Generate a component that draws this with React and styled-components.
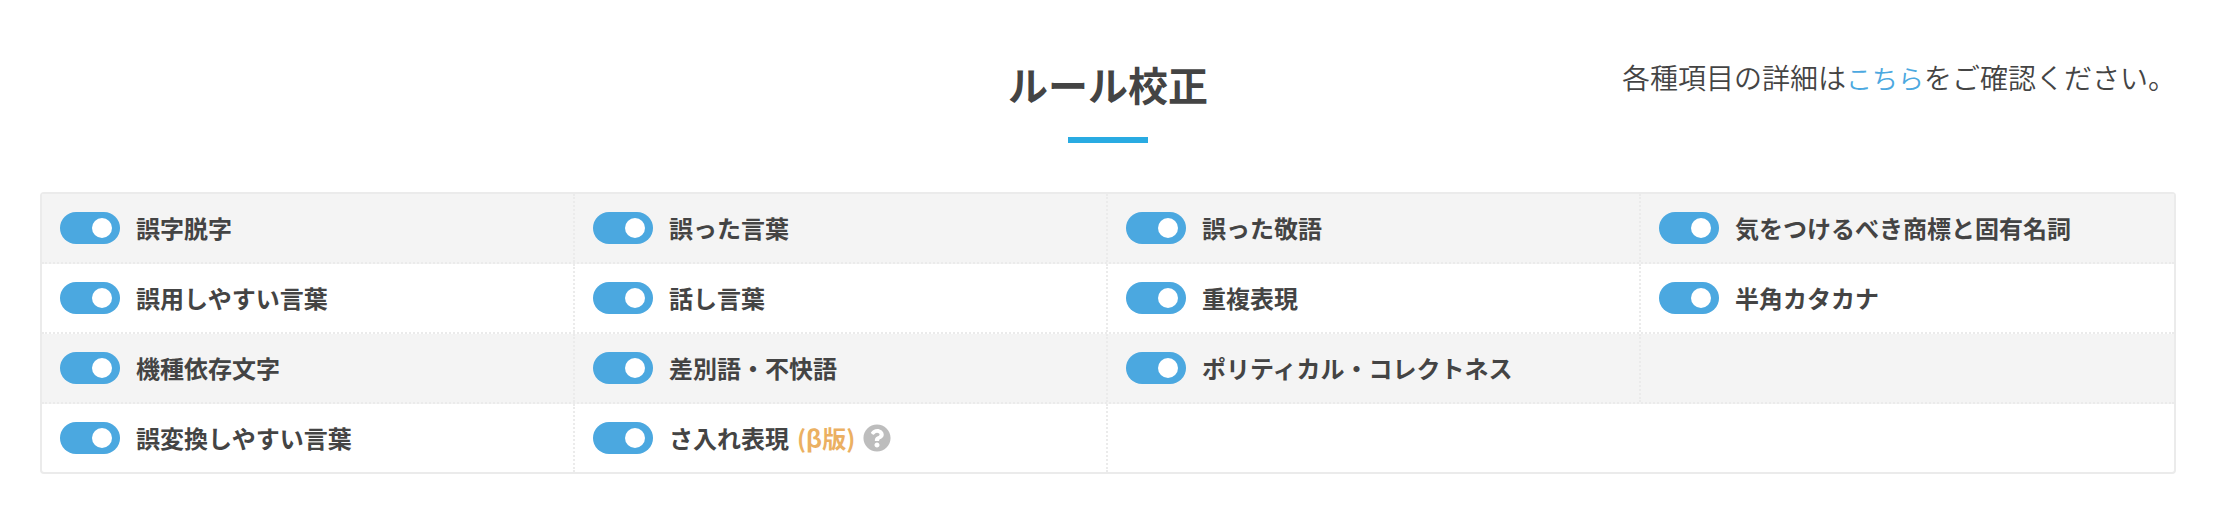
import { useState } from "react"
import styled, { createGlobalStyle } from "styled-components"
import { FaQuestionCircle } from "react-icons/fa"

const GlobalStyle = createGlobalStyle`
    body {
        margin: 0;
        background: #fff;
        color: #444;
        font-family: "Noto Sans CJK JP", sans-serif;
    }
`;

const Section = styled.section`
    padding: 53px 46px 34px 40px;
`;

const Header = styled.header`
    display: grid;
    grid-template-columns: 1fr auto 1fr;
    align-items: start;
    margin-bottom: 49px;
`;

const Title = styled.h2`
    grid-column: 2;
    display: flex;
    flex-direction: column;
    align-items: center;
    gap: 22px;
    margin: 0;
    font-size: 40px;
    font-weight: 700;
    line-height: 62px;

    &::after {
        content: "";
        width: 80px;
        height: 6px;
        background: #29abe2;
    }
`;

const Note = styled.p`
    margin: 0;
    font-size: 28px;
    font-weight: 350;
    line-height: 48px;
    text-align: right;
`;

const NoteLink = styled.a`
    color: #4ba8e0;
    font-size: 26px;
    text-decoration: none;
`;

const RuleTable = styled.div`
    border: 2px solid #ebebeb;
    border-radius: 4px;
`;

const RuleRow = styled.ul`
    display: grid;
    grid-template-columns: repeat(4, 1fr);
    margin: 0;
    padding: 0;
    list-style: none;
    border-bottom: 2px dotted #ebebeb;

    &:nth-child(odd) {
        background: #f4f4f4;
    }

    &:last-child {
        border-bottom: none;
    }
`;

const RuleCell = styled.li`
    display: flex;
    align-items: center;
    gap: 8px;
    box-sizing: border-box;
    height: 68px;
    padding: 0 18px;
    border-right: 2px dotted #ebebeb;

    &:nth-child(4) {
        border-right: none;
    }
`;

const RuleLabel = styled.label`
    display: flex;
    align-items: center;
    font-size: 24px;
    font-weight: 700;
    line-height: 34px;
    white-space: nowrap;
    cursor: pointer;
`;

const Toggle = styled.input`
    appearance: none;
    display: flex;
    align-items: center;
    box-sizing: border-box;
    width: 60px;
    height: 32px;
    margin: 0 16px 0 0;
    padding: 0 8px;
    border-radius: 16px;
    background: #bdbdbd;
    cursor: pointer;

    &::before {
        content: "";
        width: 20px;
        height: 20px;
        border-radius: 50%;
        background: #fff;
    }

    &:checked {
        justify-content: flex-end;
        background: #4ba8e0;
    }
`;

const Beta = styled.span`
    margin-left: 8px;
    color: #ebb062;
`;

const HelpButton = styled.button`
    display: flex;
    padding: 0;
    border: none;
    background: none;
    color: #bdbdbd;
    font-size: 28px;
    cursor: pointer;
`;

const rows = [
    ["誤字脱字", "誤った言葉", "誤った敬語", "気をつけるべき商標と固有名詞"],
    ["誤用しやすい言葉", "話し言葉", "重複表現", "半角カタカナ"],
    ["機種依存文字", "差別語・不快語", "ポリティカル・コレクトネス"],
    ["誤変換しやすい言葉", "さ入れ表現"],
]

const betaRules = ["さ入れ表現"]

const Rule = ({ name }) => {
    const [checked, setChecked] = useState(true)
    const isBeta = betaRules.includes(name)

    return (
        <RuleCell>
            <RuleLabel>
                <Toggle type="checkbox" checked={checked} onChange={() => setChecked(!checked)} />
                {name}
                {isBeta && <Beta>(β版)</Beta>}
            </RuleLabel>
            {isBeta && (
                <HelpButton type="button" aria-label="ヘルプ">
                    <FaQuestionCircle />
                </HelpButton>
            )}
        </RuleCell>
    )
}

const App = () => (
    <>
        <GlobalStyle />
        <Section>
            <Header>
                <Title>ルール校正</Title>
                <Note>
                    各種項目の詳細は<NoteLink href="#rules">こちら</NoteLink>をご確認ください。
                </Note>
            </Header>
            <RuleTable id="rules">
                {rows.map((row) => (
                    <RuleRow key={row[0]}>
                        {row.map((name) => <Rule key={name} name={name} />)}
                    </RuleRow>
                ))}
            </RuleTable>
        </Section>
    </>
)

export default App
